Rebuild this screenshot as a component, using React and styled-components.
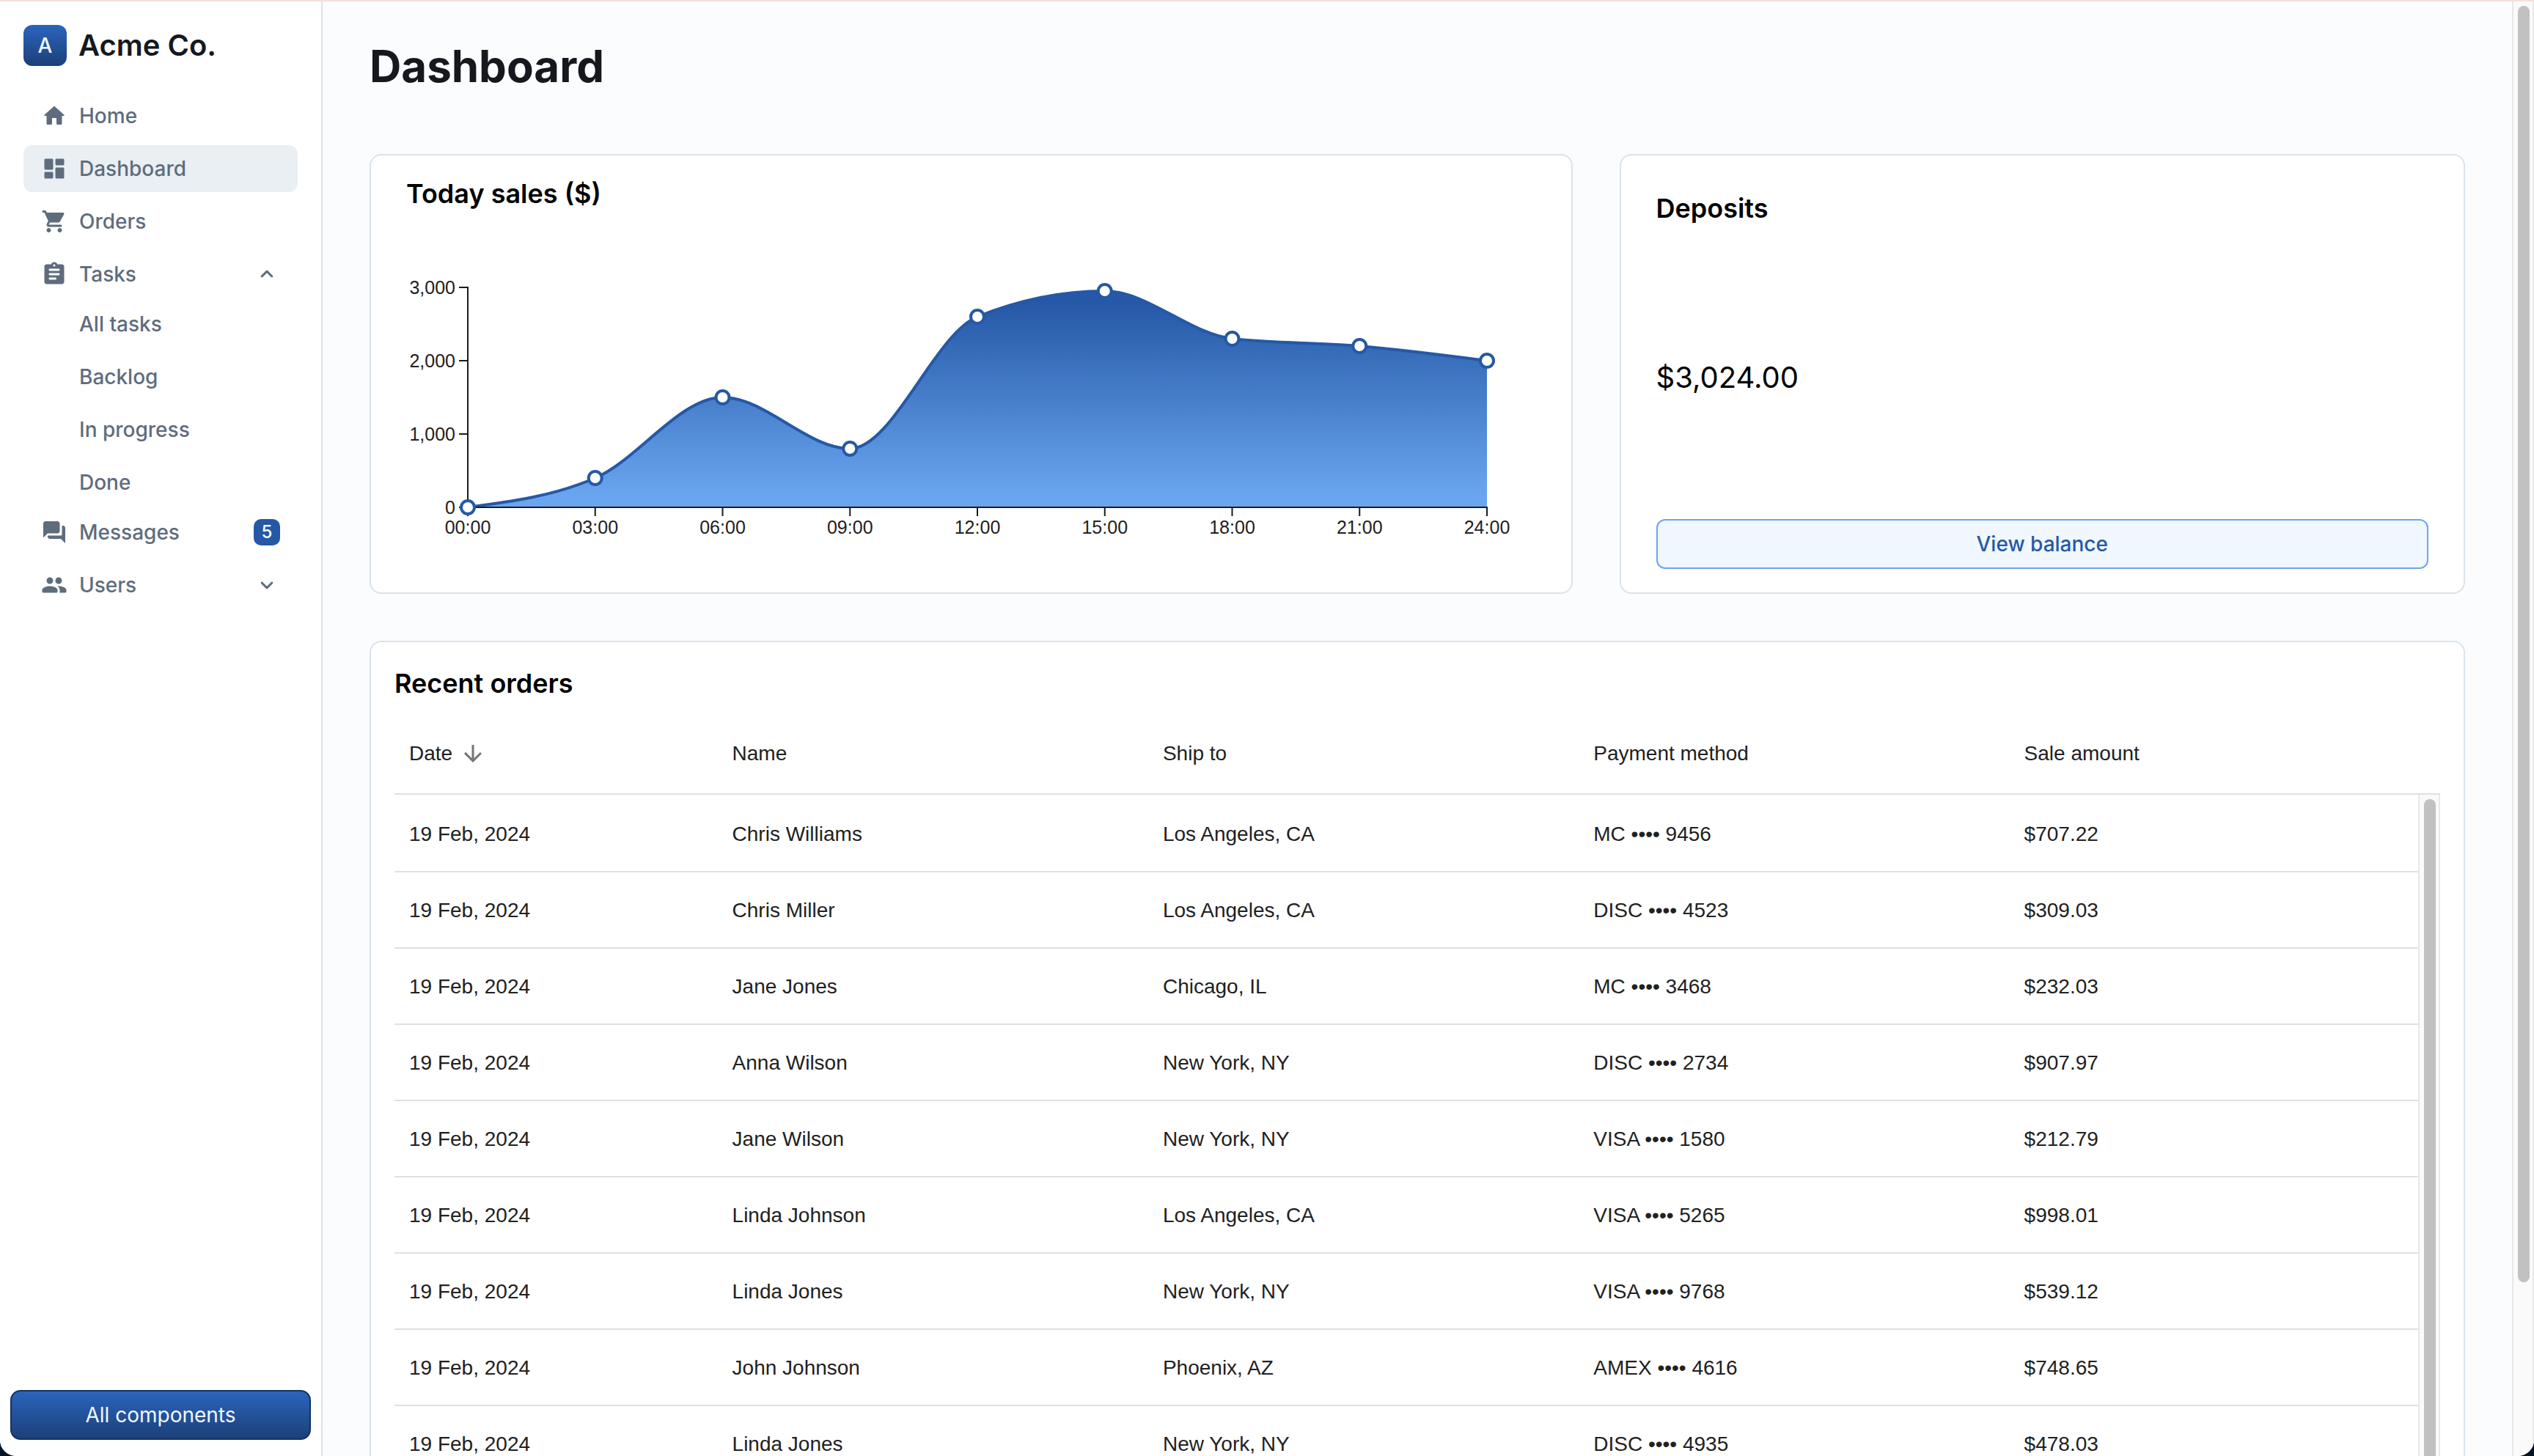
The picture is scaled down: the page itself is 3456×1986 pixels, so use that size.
import React, { useLayoutEffect, useRef, useState } from "react";
import styled, { createGlobalStyle } from "styled-components";

const inter = `Inter, "Liberation Sans", sans-serif`;
const arial = `"Liberation Sans", Arial, sans-serif`;

const color = {
  brand: "#2558a6",
  brandLight: "#6aa5f0",
  text: "#15191e",
  muted: "#5e6c7d",
  line: "#dae3eb",
  grid: "#e0e0e0",
  cell: "#212121",
};

const GlobalStyle = createGlobalStyle`
  *, *::before, *::after { box-sizing: border-box; }
  body { margin: 0; background: #06142a; font-family: ${inter}; }
  h1, h2, p, ul { margin: 0; padding: 0; }
  ul { list-style: none; }
  button { font: inherit; cursor: pointer; }
`;

const Frame = styled.div`
  display: flex;
  height: 100vh;
  overflow: hidden;
  border-top: 2px solid #f3e0d8;
  border-radius: 0 0 22px 22px;
  background: #fbfcfe;
`;

/* Sidebar */

const Sidebar = styled.aside`
  flex: none;
  display: flex;
  flex-direction: column;
  width: 440px;
  border-right: 2px solid ${color.line};
  background: #ffffff;
`;

const Brand = styled.div`
  display: flex;
  align-items: center;
  gap: 16px;
  padding: 32px 32px 0;
  color: ${color.text};
  font-size: 40px;
  font-weight: 600;
  line-height: 56px;
`;

const BrandMark = styled.span`
  display: grid;
  place-items: center;
  width: 59px;
  height: 56px;
  border-radius: 12px;
  background: linear-gradient(#2b64bd, #1c4078);
  color: #f0f7ff;
  font-size: 28px;
  font-weight: 500;
`;

const Nav = styled.nav`
  flex: 1;
  padding: 32px 32px 0;
`;

const NavItem = styled.li`
  padding: 4px 0 ${(p) => (p.$open ? "0" : "4px")};
`;

const itemBox = `
  display: flex;
  align-items: center;
  width: 100%;
  height: 64px;
  padding: 0 24px;
  border: 0;
  border-radius: 12px;
  color: ${color.muted};
  font-size: 28px;
  font-weight: 500;
  line-height: 42px;
  text-align: left;
  text-decoration: none;
`;

const NavLink = styled.a`
  ${itemBox}
  gap: 16px;
  background: ${(p) => (p.$active ? "#eaeff3" : "transparent")};
`;

const NavToggle = styled.button`
  ${itemBox}
  gap: 16px;
  background: transparent;
`;

const SubList = styled.ul`
  display: grid;
  gap: 8px;
  padding-top: 4px;
`;

const SubLink = styled.a`
  ${itemBox}
  padding-left: 76px;
`;

const Label = styled.span`
  flex: 1;
`;

const Badge = styled.span`
  display: grid;
  place-items: center;
  width: 36px;
  height: 36px;
  border-radius: 10px;
  background: ${color.brand};
  color: #ffffff;
  font-size: 24px;
  font-weight: 500;
  line-height: 36px;
`;

const IconSvg = styled.svg`
  flex: none;
  display: block;
  width: 36px;
  height: 36px;
  fill: currentColor;
`;

const SidebarFooter = styled.div`
  padding: 0 14px 22px;
`;

const PrimaryButton = styled.button`
  display: block;
  width: 100%;
  height: 68px;
  padding: 0;
  border: 2px solid #14325f;
  border-radius: 14px;
  background: linear-gradient(#2b64bd, #1c4078);
  color: #f0f7ff;
  font-size: 28px;
  font-weight: 400;
  line-height: 42px;
`;

/* Main area */

const Main = styled.main`
  flex: 1;
  min-width: 0;
  padding: 52px 64px 64px;
`;

const PageTitle = styled.h1`
  margin-bottom: 84px;
  color: ${color.text};
  font-size: 60px;
  font-weight: 700;
  line-height: 72px;
`;

const Cards = styled.div`
  display: grid;
  grid-template-columns: repeat(12, minmax(0, 1fr));
  gap: 64px;
`;

const Card = styled.section`
  grid-column: span ${(p) => p.$span};
  display: flex;
  flex-direction: column;
  justify-content: ${(p) => p.$justify || "flex-start"};
  min-width: 0;
  min-height: 600px;
  padding: ${(p) => p.$padding};
  border: 2px solid ${color.line};
  border-radius: 16px;
  background: #ffffff;
`;

const CardTitle = styled.h2`
  margin: 13px 0 11px;
  color: #000000;
  font-size: 36px;
  font-weight: 600;
  line-height: 54px;
`;

const Amount = styled.p`
  color: #000000;
  font-size: 40px;
  line-height: 60px;
`;

const OutlineButton = styled.button`
  width: 100%;
  height: 68px;
  padding: 0;
  border: 2px solid ${color.brandLight};
  border-radius: 12px;
  background: #f0f7ff;
  color: ${color.brand};
  font-size: 28px;
  font-weight: 500;
  line-height: 42px;
`;

/* Chart */

const ChartBox = styled.div`
  flex: 1;
  min-width: 0;
`;

const ChartSvg = styled.svg`
  display: block;
  width: 100%;
  height: 480px;
  overflow: visible;
`;

const Axis = styled.path`
  fill: none;
  stroke: #1b1b1b;
  stroke-width: 2px;
`;

const Tick = styled.text`
  fill: ${color.cell};
  font-family: ${arial};
  font-size: 25px;
  text-anchor: ${(p) => p.$anchor};
`;

const Curve = styled.path`
  fill: none;
  stroke: ${color.brand};
  stroke-width: 4px;
`;

const Mark = styled.circle`
  fill: #ffffff;
  stroke: ${color.brand};
  stroke-width: 4px;
`;

/* Table */

const TableWrap = styled.div`
  position: relative;
  margin-top: 4px;
`;

const Table = styled.table`
  width: 100%;
  table-layout: fixed;
  border-collapse: separate;
  border-spacing: 0;
  color: ${color.cell};
  font-family: ${arial};
  font-size: 28px;
  line-height: 40px;
  text-align: left;
`;

const Col = styled.col`
  width: ${(p) => p.$width};
`;

const HeadCell = styled.th`
  height: 110px;
  padding: 0 20px;
  border-bottom: 2px solid ${color.grid};
  font-weight: 400;
`;

const HeadLabel = styled.span`
  display: flex;
  align-items: center;
  gap: 10px;
`;

const SortIcon = styled(IconSvg)`
  color: #757575;
`;

const Body = styled.tbody`
  &::before {
    content: "";
    display: block;
    height: 2px;
  }
`;

const Cell = styled.td`
  height: 104px;
  padding: 2px 20px 0;
  border-bottom: 2px solid ${color.grid};
`;

/* Scrollbars */

const Track = styled.div`
  flex: none;
  width: 30px;
  padding: 6px 4px 0 6px;
  border: solid #e8e8e8;
  border-width: 0 2px;
  background: #fafafa;
`;

const TableTrack = styled(Track)`
  position: absolute;
  top: 110px;
  right: 0;
  bottom: 0;
`;

const Thumb = styled.div`
  width: 16px;
  height: ${(p) => p.$size};
  border-radius: 8px;
  background: #c1c1c1;
`;

const icons = {
  home: "M10 19v-5h4v5c0 .55.45 1 1 1h3c.55 0 1-.45 1-1v-7h1.7c.46 0 .68-.57.33-.87L12.67 3.6c-.38-.34-.96-.34-1.34 0l-8.36 7.53c-.34.3-.13.87.33.87H5v7c0 .55.45 1 1 1h3c.55 0 1-.45 1-1z",
  dashboard:
    "M4 13h6c.55 0 1-.45 1-1V4c0-.55-.45-1-1-1H4c-.55 0-1 .45-1 1v8c0 .55.45 1 1 1zm0 8h6c.55 0 1-.45 1-1v-4c0-.55-.45-1-1-1H4c-.55 0-1 .45-1 1v4c0 .55.45 1 1 1zm10 0h6c.55 0 1-.45 1-1v-8c0-.55-.45-1-1-1h-6c-.55 0-1 .45-1 1v8c0 .55.45 1 1 1zM13 4v4c0 .55.45 1 1 1h6c.55 0 1-.45 1-1V4c0-.55-.45-1-1-1h-6c-.55 0-1 .45-1 1z",
  cart: "M7 18c-1.1 0-1.99.9-1.99 2S5.9 22 7 22s2-.9 2-2-.9-2-2-2zM1 3c0 .55.45 1 1 1h1l3.6 7.59-1.35 2.44C4.52 15.37 5.48 17 7 17h11c.55 0 1-.45 1-1s-.45-1-1-1H7l1.1-2h7.45c.75 0 1.41-.41 1.75-1.03l3.58-6.49c.37-.66-.11-1.48-.87-1.48H5.21l-.67-1.43c-.16-.35-.52-.57-.9-.57H2c-.55 0-1 .45-1 1zm16 15c-1.1 0-1.99.9-1.99 2s.89 2 1.99 2 2-.9 2-2-.9-2-2-2z",
  tasks:
    "M19 3h-4.18C14.4 1.84 13.3 1 12 1s-2.4.84-2.82 2H5c-1.1 0-2 .9-2 2v14c0 1.1.9 2 2 2h14c1.1 0 2-.9 2-2V5c0-1.1-.9-2-2-2zm-7 0c.55 0 1 .45 1 1s-.45 1-1 1-1-.45-1-1 .45-1 1-1zm1 14H8c-.55 0-1-.45-1-1s.45-1 1-1h5c.55 0 1 .45 1 1s-.45 1-1 1zm3-4H8c-.55 0-1-.45-1-1s.45-1 1-1h8c.55 0 1 .45 1 1s-.45 1-1 1zm0-4H8c-.55 0-1-.45-1-1s.45-1 1-1h8c.55 0 1 .45 1 1s-.45 1-1 1z",
  messages:
    "M20 6h-1v8c0 .55-.45 1-1 1H6v1c0 1.1.9 2 2 2h10l4 4V8c0-1.1-.9-2-2-2zm-3 5V4c0-1.1-.9-2-2-2H4c-1.1 0-2 .9-2 2v13l4-4h9c1.1 0 2-.9 2-2z",
  users:
    "M16 11c1.66 0 2.99-1.34 2.99-3S17.66 5 16 5s-3 1.34-3 3 1.34 3 3 3zm-8 0c1.66 0 2.99-1.34 2.99-3S9.66 5 8 5 5 6.34 5 8s1.34 3 3 3zm0 2c-2.33 0-7 1.17-7 3.5V18c0 .55.45 1 1 1h12c.55 0 1-.45 1-1v-1.5c0-2.33-4.67-3.5-7-3.5zm8 0c-.29 0-.62.02-.97.05.02.01.03.03.04.04 1.14.83 1.93 1.94 1.93 3.41V18c0 .35-.07.69-.18 1H22c.55 0 1-.45 1-1v-1.5c0-2.33-4.67-3.5-7-3.5z",
  up: "M8.12 14.71 12 10.83l3.88 3.88c.39.39 1.02.39 1.41 0 .39-.39.39-1.02 0-1.41L12.7 8.71c-.39-.39-1.02-.39-1.41 0L6.7 13.3c-.39.39-.39 1.02 0 1.41.39.38 1.03.39 1.42 0z",
  down: "M8.12 9.29 12 13.17l3.88-3.88c.39-.39 1.02-.39 1.41 0 .39.39.39 1.02 0 1.41l-4.59 4.59c-.39.39-1.02.39-1.41 0L6.7 10.7c-.39-.39-.39-1.02 0-1.41.39-.38 1.03-.39 1.42 0z",
  sort: "M20 12l-1.41-1.41L13 16.17V4h-2v12.17l-5.58-5.59L4 12l8 8 8-8z",
};

const Icon = ({ name, as: Tag = IconSvg }) => (
  <Tag viewBox="0 0 24 24" aria-hidden="true">
    <path d={icons[name]} />
  </Tag>
);

const sales = [
  ["00:00", 0],
  ["03:00", 400],
  ["06:00", 1500],
  ["09:00", 800],
  ["12:00", 2600],
  ["15:00", 2950],
  ["18:00", 2300],
  ["21:00", 2200],
  ["24:00", 2000],
];

/* Monotone cubic interpolation through points with increasing x. */
function monotonePath(pts) {
  const n = pts.length;
  const slope = (a, b) => (b[1] - a[1]) / (b[0] - a[0]);
  const t = new Array(n);
  for (let i = 1; i < n - 1; i++) {
    const s0 = slope(pts[i - 1], pts[i]);
    const s1 = slope(pts[i], pts[i + 1]);
    const h0 = pts[i][0] - pts[i - 1][0];
    const h1 = pts[i + 1][0] - pts[i][0];
    const p = (s0 * h1 + s1 * h0) / (h0 + h1);
    t[i] =
      (Math.sign(s0) + Math.sign(s1)) *
        Math.min(Math.abs(s0), Math.abs(s1), 0.5 * Math.abs(p)) || 0;
  }
  t[0] = (3 * slope(pts[0], pts[1]) - t[1]) / 2;
  t[n - 1] = (3 * slope(pts[n - 2], pts[n - 1]) - t[n - 2]) / 2;
  let d = `M${pts[0][0]},${pts[0][1]}`;
  for (let i = 1; i < n; i++) {
    const [x0, y0] = pts[i - 1];
    const [x1, y1] = pts[i];
    const dx = (x1 - x0) / 3;
    d += `C${x0 + dx},${y0 + dx * t[i - 1]},${x1 - dx},${y1 - dx * t[i]},${x1},${y1}`;
  }
  return d;
}

function SalesChart() {
  const box = useRef(null);
  const [width, setWidth] = useState(1540);

  useLayoutEffect(() => {
    const measure = () => setWidth(box.current.clientWidth);
    measure();
    const observer = new ResizeObserver(measure);
    observer.observe(box.current);
    return () => observer.disconnect();
  }, []);

  const left = 84;
  const right = width - 67;
  const top = 90;
  const bottom = 390;
  const x = (i) => left + ((right - left) * i) / (sales.length - 1);
  const y = (v) => bottom - (v / 3000) * (bottom - top);
  const points = sales.map(([, v], i) => [x(i), y(v)]);
  const curve = monotonePath(points);

  return (
    <ChartBox ref={box}>
      <ChartSvg role="img" aria-label="Today sales">
        <defs>
          <linearGradient id="sales-fill" x1="0" y1="0" x2="0" y2="1">
            <stop offset="5%" stopColor={color.brand} />
            <stop offset="95%" stopColor={color.brandLight} />
          </linearGradient>
        </defs>
        <path d={`${curve}L${right},${bottom}L${left},${bottom}Z`} fill="url(#sales-fill)" />
        <Curve d={curve} />
        <Axis d={`M${left},${top - 1}V${bottom}H${right + 1}`} />
        {[0, 1000, 2000, 3000].map((v) => (
          <g key={v}>
            <Axis d={`M${left - 12},${y(v)}H${left}`} />
            <Tick $anchor="end" x={left - 17} y={y(v) + 9}>
              {v.toLocaleString("en-US")}
            </Tick>
          </g>
        ))}
        {sales.map(([time], i) => (
          <g key={time}>
            <Axis d={`M${x(i)},${bottom}v12`} />
            <Tick $anchor="middle" x={x(i)} y={bottom + 36}>
              {time}
            </Tick>
          </g>
        ))}
        {points.map(([cx, cy]) => (
          <Mark key={cx} cx={cx} cy={cy} r="9" />
        ))}
      </ChartSvg>
    </ChartBox>
  );
}

const orders = [
  ["19 Feb, 2024", "Chris Williams", "Los Angeles, CA", "MC •••• 9456", "$707.22"],
  ["19 Feb, 2024", "Chris Miller", "Los Angeles, CA", "DISC •••• 4523", "$309.03"],
  ["19 Feb, 2024", "Jane Jones", "Chicago, IL", "MC •••• 3468", "$232.03"],
  ["19 Feb, 2024", "Anna Wilson", "New York, NY", "DISC •••• 2734", "$907.97"],
  ["19 Feb, 2024", "Jane Wilson", "New York, NY", "VISA •••• 1580", "$212.79"],
  ["19 Feb, 2024", "Linda Johnson", "Los Angeles, CA", "VISA •••• 5265", "$998.01"],
  ["19 Feb, 2024", "Linda Jones", "New York, NY", "VISA •••• 9768", "$539.12"],
  ["19 Feb, 2024", "John Johnson", "Phoenix, AZ", "AMEX •••• 4616", "$748.65"],
  ["19 Feb, 2024", "Linda Jones", "New York, NY", "DISC •••• 4935", "$478.03"],
];

const columns = ["Date", "Name", "Ship to", "Payment method", "Sale amount"];

function OrdersTable() {
  return (
    <TableWrap>
      <Table>
        <colgroup>
          {columns.map((name, i) => (
            <Col key={name} $width={i === 0 ? "15.79%" : "21.05%"} />
          ))}
        </colgroup>
        <thead>
          <tr>
            {columns.map((name, i) => (
              <HeadCell key={name} scope="col" aria-sort={i === 0 ? "descending" : undefined}>
                <HeadLabel>
                  {name}
                  {i === 0 && <Icon name="sort" as={SortIcon} />}
                </HeadLabel>
              </HeadCell>
            ))}
          </tr>
        </thead>
        <Body>
          {orders.map((row, r) => (
            <tr key={r}>
              {row.map((value, c) => (
                <Cell key={c}>{value}</Cell>
              ))}
            </tr>
          ))}
        </Body>
      </Table>
      <TableTrack>
        <Thumb $size="100%" />
      </TableTrack>
    </TableWrap>
  );
}

const tasks = ["All tasks", "Backlog", "In progress", "Done"];

function SideNav() {
  return (
    <Sidebar>
      <Brand>
        <BrandMark>A</BrandMark>
        Acme Co.
      </Brand>
      <Nav aria-label="Main">
        <ul>
          <NavItem>
            <NavLink href="#home">
              <Icon name="home" />
              <Label>Home</Label>
            </NavLink>
          </NavItem>
          <NavItem>
            <NavLink href="#dashboard" $active aria-current="page">
              <Icon name="dashboard" />
              <Label>Dashboard</Label>
            </NavLink>
          </NavItem>
          <NavItem>
            <NavLink href="#orders">
              <Icon name="cart" />
              <Label>Orders</Label>
            </NavLink>
          </NavItem>
          <NavItem $open>
            <NavToggle type="button" aria-expanded="true">
              <Icon name="tasks" />
              <Label>Tasks</Label>
              <Icon name="up" />
            </NavToggle>
            <SubList>
              {tasks.map((task) => (
                <li key={task}>
                  <SubLink href="#tasks">{task}</SubLink>
                </li>
              ))}
            </SubList>
          </NavItem>
          <NavItem>
            <NavLink href="#messages">
              <Icon name="messages" />
              <Label>Messages</Label>
              <Badge>5</Badge>
            </NavLink>
          </NavItem>
          <NavItem>
            <NavToggle type="button" aria-expanded="false">
              <Icon name="users" />
              <Label>Users</Label>
              <Icon name="down" />
            </NavToggle>
          </NavItem>
        </ul>
      </Nav>
      <SidebarFooter>
        <PrimaryButton type="button">All components</PrimaryButton>
      </SidebarFooter>
    </Sidebar>
  );
}

export default function App() {
  return (
    <>
      <GlobalStyle />
      <Frame>
        <SideNav />
        <Main>
          <PageTitle>Dashboard</PageTitle>
          <Cards>
            <Card $span={7} $padding="12px 48px 0">
              <CardTitle>Today sales ($)</CardTitle>
              <SalesChart />
            </Card>
            <Card $span={5} $padding="32px 48px" $justify="space-between">
              <CardTitle>Deposits</CardTitle>
              <Amount>$3,024.00</Amount>
              <OutlineButton type="button">View balance</OutlineButton>
            </Card>
            <Card $span={12} $padding="16px 32px 0">
              <CardTitle>Recent orders</CardTitle>
              <OrdersTable />
            </Card>
          </Cards>
        </Main>
        <Track>
          <Thumb $size="88%" />
        </Track>
      </Frame>
    </>
  );
}
